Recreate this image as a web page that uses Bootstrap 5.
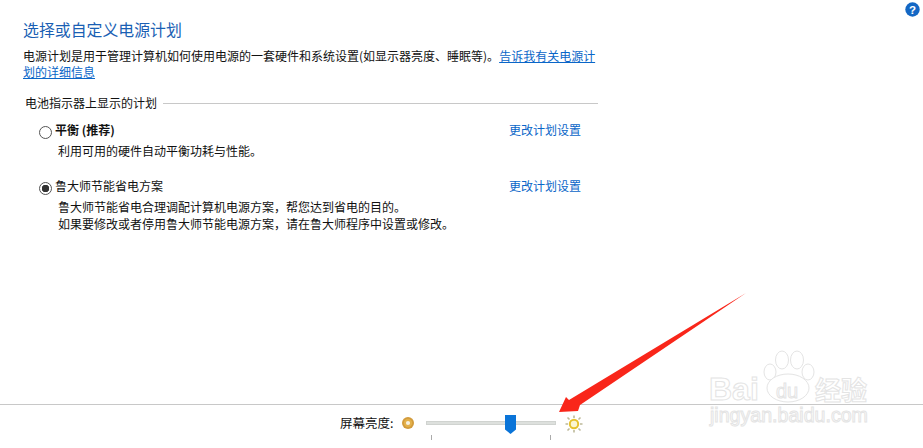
<!DOCTYPE html>
<html lang="zh-CN">
<head>
    <meta charset="UTF-8">
    <meta name="viewport" content="width=device-width, initial-scale=1.0">
    <title>电源选项</title>
    <link href="https://cdn.jsdelivr.net/npm/bootstrap@5.3.0/dist/css/bootstrap.min.css" rel="stylesheet">
    <style>
        html, body {
            height: 448px;
            overflow: hidden;
        }
        body {
            background: #fff;
            color: #111;
            font-family: "Noto Sans CJK SC", "Liberation Sans", sans-serif;
            font-size: 12px;
            line-height: 16px;
        }
        .power-main {
            padding: 20px 0 0 23px;
            width: 598px;
            height: 404px;
        }
        .power-title {
            color: #1a5fb4;
            font-size: 15.9px;
            font-weight: 400;
            line-height: 20px;
            margin: 0 0 8px;
        }
        .power-intro {
            margin: 0 0 15px;
            width: 580px;
        }
        .power-intro a, .plan-link {
            color: #0a66c8;
        }
        .plan-link {
            text-decoration: none;
        }
        .group-head {
            line-height: 16px;
            margin-bottom: 11px;
            padding-left: 2px;
        }
        .group-head hr {
            border-color: #c8c8c8;
            opacity: 1;
            margin: 0 0 0 6px;
        }
        .plan-item {
            padding: 0 17px 0 16px;
        }
        .plan-item + .plan-item {
            margin-top: 19px;
        }
        .plan-radio.form-check-input {
            width: 13px;
            height: 13px;
            margin: 4px 3px 0 0;
            border: 1px solid #555;
            background-image: none;
            flex: none;
        }
        .plan-radio.form-check-input:checked {
            background: radial-gradient(circle, #333 0 3.5px, #fff 4px);
            border-color: #555;
        }
        .plan-desc {
            padding: 3px 0 0 19px;
            line-height: 17px;
        }
        .bright-bar {
            border-top: 1px solid #c8c8c8;
            height: 44px;
            padding: 9px 0 0 340px;
        }
        .bright-label {
            width: 57px;
            font-size: 12.5px;
            line-height: 18px;
            white-space: nowrap;
        }
        .dim-icon {
            width: 14px;
            height: 14px;
            margin: 2px 11px 0 4px;
        }
        .sun-icon {
            width: 18px;
            height: 18px;
            margin: 1px 0 0 9px;
        }
        .bright-slider {
            position: relative;
            width: 130px;
            height: 30px;
        }
        .slider-track {
            position: absolute;
            top: 7px;
            left: 0;
            right: 0;
            height: 4px;
            background: #dde0dd;
            border: 1px solid #d0d3d0;
        }
        .slider-thumb {
            position: absolute;
            top: 1px;
            left: 79px;
            width: 11px;
            height: 19px;
        }
        .slider-tick {
            position: absolute;
            top: 21px;
            width: 1px;
            height: 5px;
            background: #aaa;
        }
        .help-icon {
            position: absolute;
            top: 2px;
            left: 905px;
            width: 15px;
            height: 15px;
        }
        .red-arrow {
            position: absolute;
            top: 290px;
            left: 555px;
            width: 200px;
            height: 125px;
        }
        .baidu-mark {
            position: absolute;
            top: 345px;
            left: 700px;
            width: 180px;
            height: 90px;
        }
        .baidu-mark text {
            fill: #fff;
            stroke: #e4e4e4;
            stroke-width: 1;
        }
    </style>
</head>
<body class="position-relative">

    <svg class="help-icon" viewBox="0 0 15 15">
        <circle cx="7.5" cy="7.5" r="7.2" fill="#1467c4"/>
        <text x="7.5" y="11.6" text-anchor="middle" font-family="Liberation Sans, sans-serif" font-size="11.5" font-weight="700" fill="#fff">?</text>
    </svg>

    <div class="power-main">
        <h1 class="power-title">选择或自定义电源计划</h1>
        <p class="power-intro">电源计划是用于管理计算机如何使用电源的一套硬件和系统设置(如显示器亮度、睡眠等)。<a href="#">告诉我有关电源计划的详细信息</a></p>

        <div class="group-head d-flex align-items-center">
            <span class="text-nowrap">电池指示器上显示的计划</span>
            <hr class="flex-grow-1">
        </div>

        <div class="plan-item">
            <div class="d-flex align-items-start">
                <input class="form-check-input plan-radio" type="radio" name="plan">
                <strong class="flex-grow-1 fw-bold">平衡 (推荐)</strong>
                <a class="plan-link" href="#">更改计划设置</a>
            </div>
            <div class="plan-desc">利用可用的硬件自动平衡功耗与性能。</div>
        </div>

        <div class="plan-item">
            <div class="d-flex align-items-start">
                <input class="form-check-input plan-radio" type="radio" name="plan" checked>
                <span class="flex-grow-1">鲁大师节能省电方案</span>
                <a class="plan-link" href="#">更改计划设置</a>
            </div>
            <div class="plan-desc">鲁大师节能省电合理调配计算机电源方案，帮您达到省电的目的。<br>如果要修改或者停用鲁大师节能电源方案，请在鲁大师程序中设置或修改。</div>
        </div>
    </div>

    <div class="bright-bar d-flex align-items-start">
        <span class="bright-label">屏幕亮度:</span>
        <svg class="dim-icon" viewBox="0 0 14 14">
            <circle cx="7" cy="7" r="6" fill="#d29b3c"/>
            <circle cx="7" cy="7" r="4.2" fill="#e3b04a"/>
            <circle cx="7" cy="7" r="2.1" fill="#f6f1e2"/>
        </svg>
        <div class="bright-slider">
            <div class="slider-track"></div>
            <svg class="slider-thumb" viewBox="0 0 11 19"><path d="M0 0H11V14.5L5.5 19L0 14.5Z" fill="#0a74d8"/></svg>
            <div class="slider-tick" style="left: 5px"></div>
            <div class="slider-tick" style="left: 124px"></div>
        </div>
        <svg class="sun-icon" viewBox="0 0 18 18">
            <g stroke="#bdb999" stroke-width="1.6">
                <path d="M9 0.5V3M9 15V17.5M0.5 9H3M15 9H17.5M2.5 2.5L4.5 4.5M13.5 13.5L15.5 15.5M15.5 2.5L13.5 4.5M4.5 13.5L2.5 15.5"/>
            </g>
            <circle cx="9" cy="9" r="4.2" fill="#fbf6d2" stroke="#e6c22e" stroke-width="2"/>
        </svg>
    </div>

    <svg class="red-arrow" viewBox="0 0 200 125">
        <path d="M191 3L25 115L23 121L4 122L11 107L14 110Z" fill="#f9261a"/>
    </svg>

    <svg class="baidu-mark" viewBox="0 0 180 90">
        <g fill="#fff" stroke="#e4e4e4">
            <ellipse cx="82" cy="15" rx="6.5" ry="9"/>
            <ellipse cx="97" cy="15" rx="6.5" ry="9"/>
            <ellipse cx="70" cy="27" rx="6" ry="8"/>
            <ellipse cx="108" cy="27" rx="6" ry="8"/>
            <ellipse cx="88" cy="43" rx="21" ry="14"/>
        </g>
        <text x="9" y="55" font-family="Liberation Sans, sans-serif" font-size="32" font-weight="700">Bai</text>
        <text x="76" y="53" font-family="Liberation Sans, sans-serif" font-size="20">du</text>
        <text x="115" y="55" font-family="Noto Sans CJK SC, sans-serif" font-size="26" font-weight="700">经验</text>
        <text x="10" y="77" font-family="Liberation Sans, sans-serif" font-size="19.6">jingyan.baidu.com</text>
    </svg>

</body>
</html>
